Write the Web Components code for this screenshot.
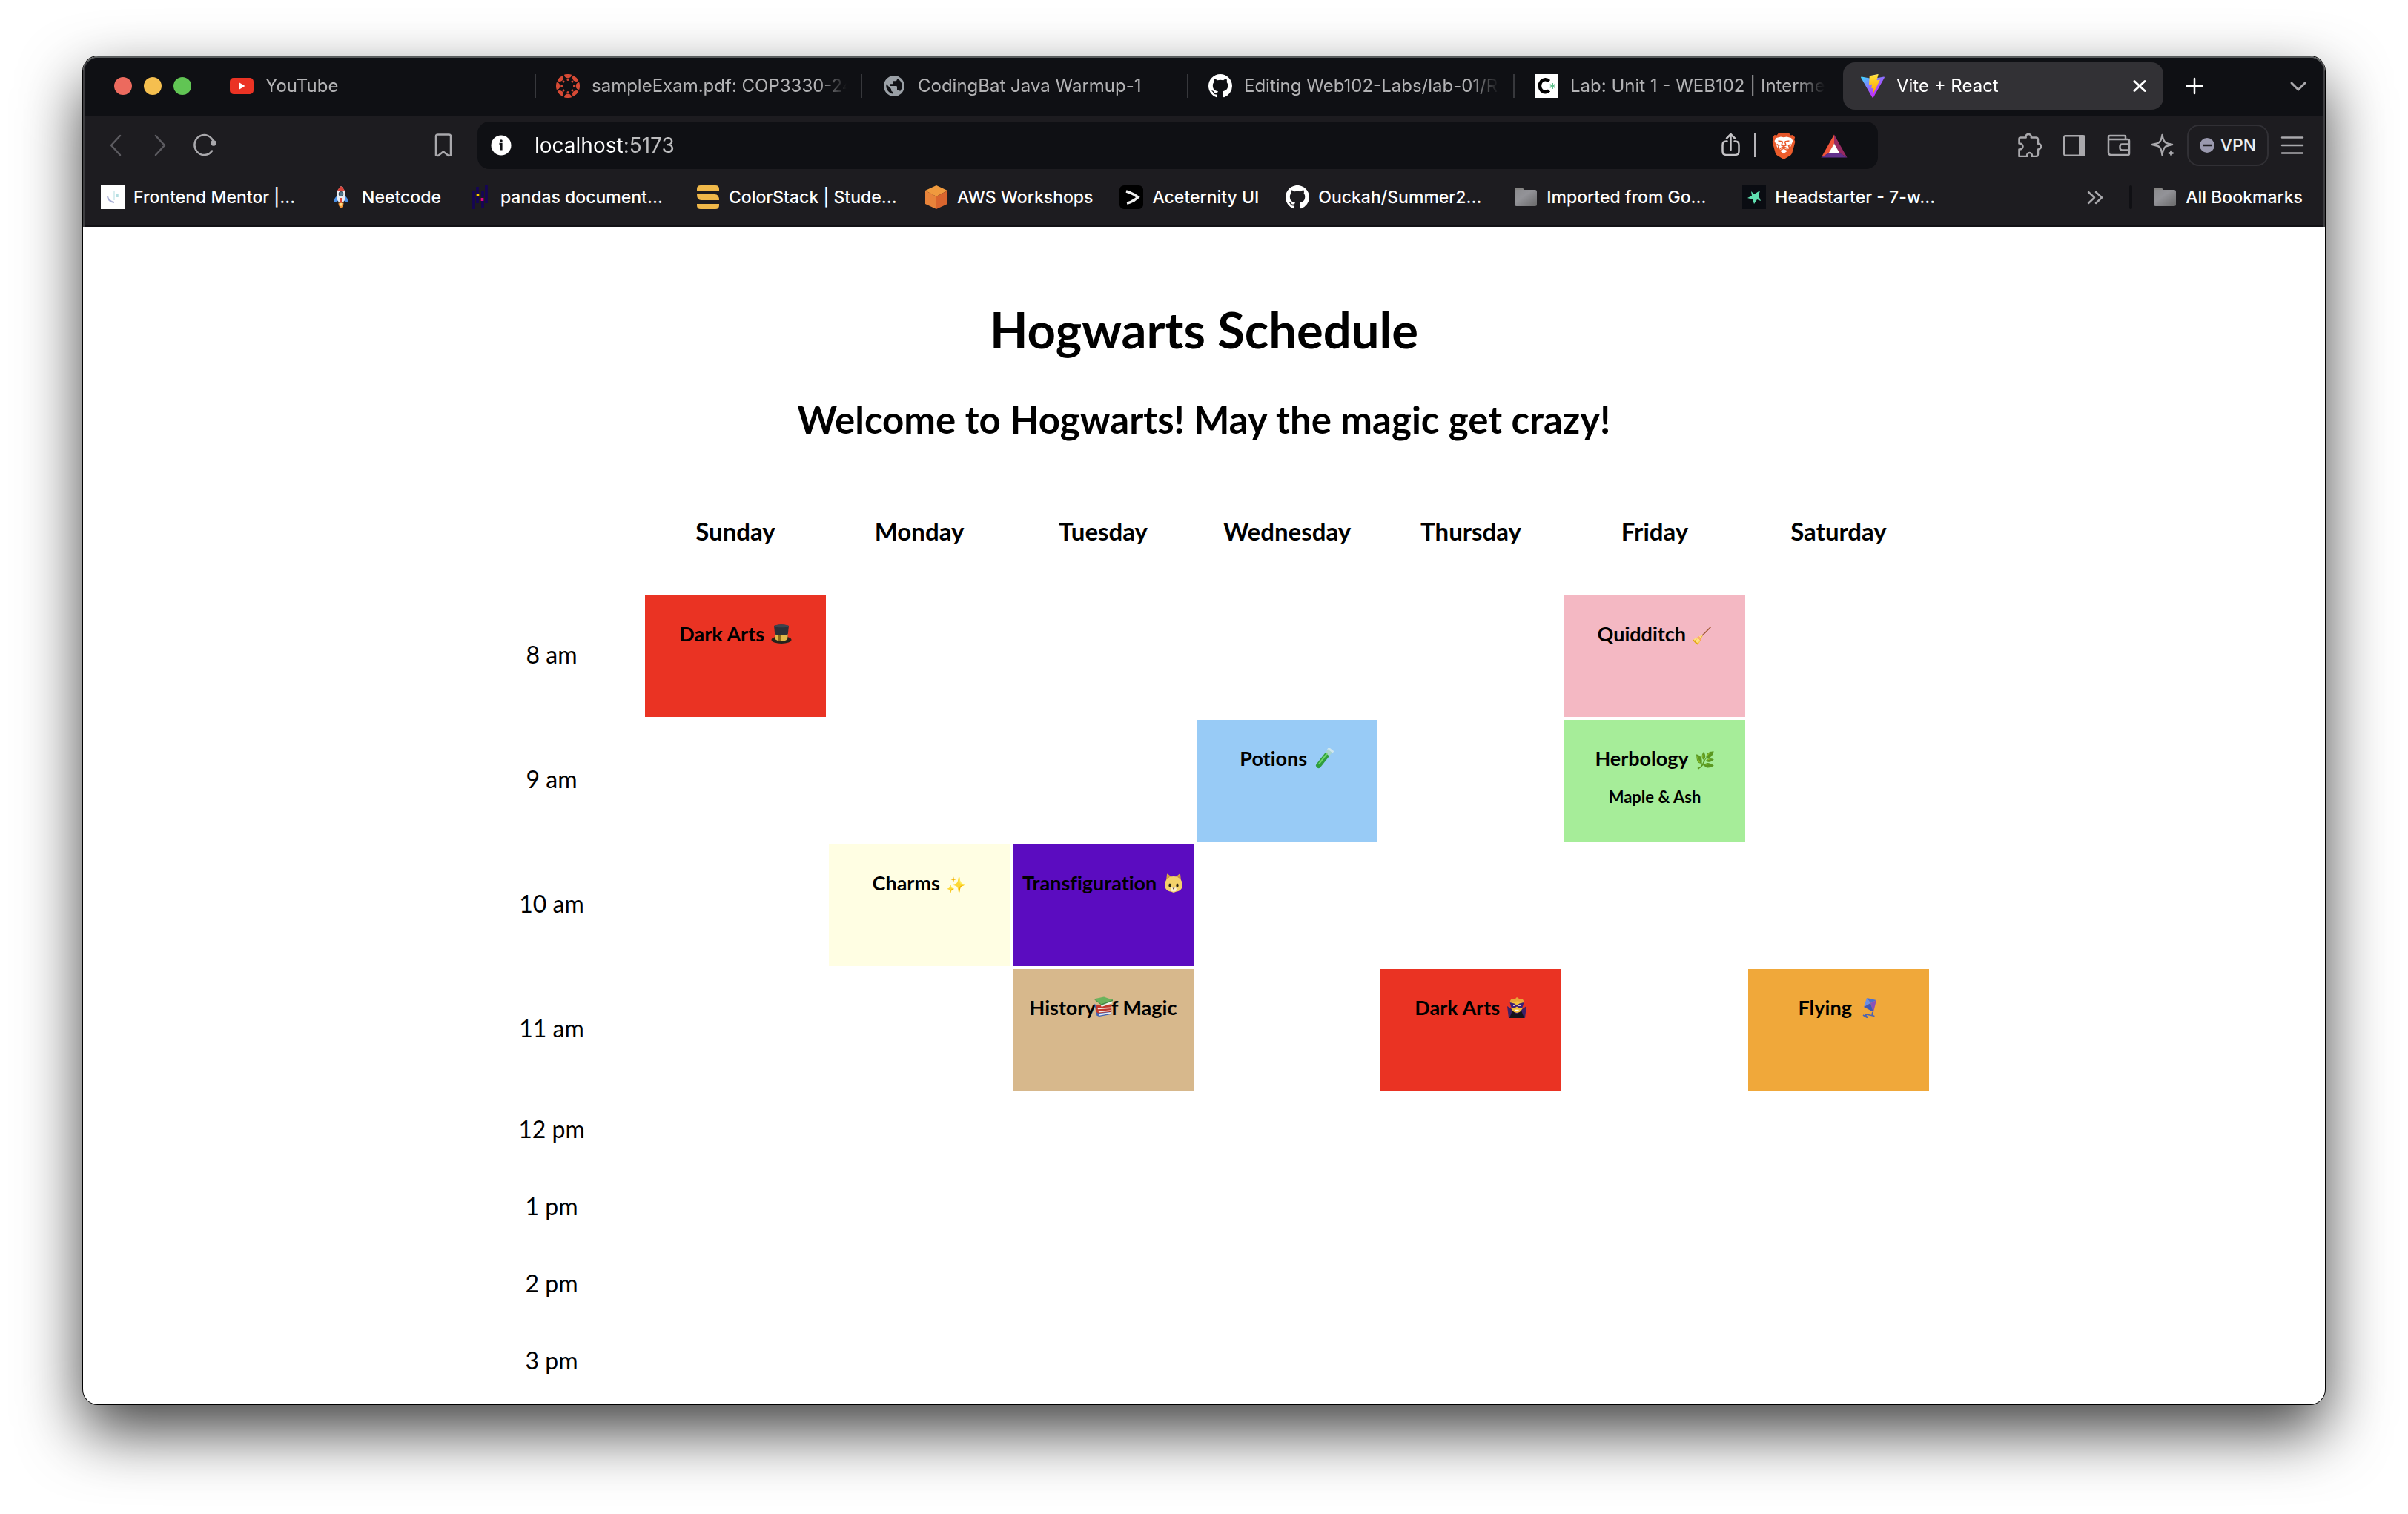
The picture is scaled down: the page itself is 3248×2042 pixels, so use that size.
<!DOCTYPE html>
<html lang="en">
<head>
<meta charset="utf-8">
<meta name="viewport" content="width=device-width, initial-scale=1">
<title>Vite + React</title>
<style>
  html { background: #fff; }
  body { margin: 0; font-family: Lato, "Open Sans", sans-serif; color: #000; }
</style>
</head>
<body>
<browser-window>
  <browser-chrome slot="chrome"></browser-chrome>
  <schedule-page></schedule-page>
</browser-window>

<script>
const GITHUB = '<path fill="#fff" d="M8 0C3.58 0 0 3.58 0 8c0 3.54 2.29 6.53 5.47 7.59.4.07.55-.17.55-.38 0-.19-.01-.82-.01-1.49-2.01.37-2.53-.49-2.69-.94-.09-.23-.48-.94-.82-1.13-.28-.15-.68-.52-.01-.53.63-.01 1.08.58 1.23.82.72 1.21 1.87.87 2.33.66.07-.52.28-.87.51-1.07-1.78-.2-3.64-.89-3.64-3.95 0-.87.31-1.59.82-2.15-.08-.2-.36-1.02.08-2.12 0 0 .67-.21 2.2.82.64-.18 1.32-.27 2-.27s1.36.09 2 .27c1.53-1.04 2.2-.82 2.2-.82.44 1.1.16 1.92.08 2.12.51.56.82 1.27.82 2.15 0 3.07-1.87 3.75-3.65 3.95.29.25.54.73.54 1.48 0 1.07-.01 1.93-.01 2.2 0 .21.15.46.55.38A8.01 8.01 0 0 0 16 8c0-4.42-3.58-8-8-8z"/>';
const line = (d, w = 2.5, c = '#a9a8ac') => `<path d="${d}" fill="none" stroke="${c}" stroke-width="${w}" stroke-linecap="round" stroke-linejoin="round"/>`;
const canvasRing = Array.from({ length: 8 }, (_, i) =>
  `<g transform="rotate(${i * 45} 16 16)"><path d="M11 .8a15.8 15.8 0 0 1 10 0a5 4.6 0 0 1-10 0z"/><circle cx="16" cy="7.6" r="1.5"/></g>`).join('');

/* name: [viewBox, markup] — 32-unit boxes unless the logo has its own grid */
const ICONS = {
  youtube: ['0 0 32 32', '<rect y="5" width="32" height="22" rx="5" fill="#eb3324"/><path d="M13 11.5v9l7.5-4.5z" fill="#fff"/>'],
  canvas: ['0 0 32 32', `<g fill="#d64a35">${canvasRing}</g>`],
  globe: ['0 0 24 24', '<path fill="#9aa0a6" d="M12 1.5C6.2 1.5 1.5 6.2 1.5 12S6.2 22.5 12 22.5 22.5 17.8 22.5 12 17.8 1.5 12 1.5zm-1 18.43c-3.95-.49-7-3.85-7-7.93 0-.62.08-1.21.21-1.79L9 15v1c0 1.1.9 2 2 2v1.93zm6.9-2.54c-.26-.81-1-1.39-1.9-1.39h-1v-3c0-.55-.45-1-1-1H8v-2h2c.55 0 1-.45 1-1V7h2c1.1 0 2-.9 2-2v-.41c2.93 1.19 5 4.06 5 7.41 0 2.08-.8 3.97-2.1 5.39z"/>'],
  github: ['0 0 16 16', GITHUB],
  codepath: ['0 0 32 32', '<rect width="32" height="32" fill="#fff"/><path d="M19.5 9.5A7.5 8.5 0 1 0 19.5 22" fill="none" stroke="#000" stroke-width="4.5"/><path d="M24 12v8M20.5 14l7 4M27.5 14l-7 4" stroke="#5fc08c" stroke-width="2"/>'],
  vite: ['0 0 256 257', '<defs><linearGradient id="a" x1="-.8%" x2="57.6%" y1="7.6%" y2="78.4%"><stop stop-color="#41D1FF"/><stop offset="1" stop-color="#BD34FE"/></linearGradient><linearGradient id="b" x1="43.4%" x2="50.3%" y1="2.2%" y2="89%"><stop stop-color="#FFEA83"/><stop offset=".08" stop-color="#FFDD35"/><stop offset="1" stop-color="#FFA800"/></linearGradient></defs><path fill="url(#a)" d="M255.153 37.938L134.897 252.976c-2.483 4.44-8.862 4.466-11.382.048L.875 37.958c-2.746-4.814 1.371-10.646 6.827-9.67l120.385 21.517a6.537 6.537 0 0 0 2.322-.004l117.867-21.483c5.438-.991 9.574 4.796 6.877 9.62Z"/><path fill="url(#b)" d="M185.432.063L96.44 17.501a3.268 3.268 0 0 0-2.634 3.014l-5.474 92.456a3.268 3.268 0 0 0 3.997 3.378l24.777-5.718c2.318-.535 4.413 1.507 3.936 3.838l-7.361 36.047c-.495 2.426 1.782 4.5 4.151 3.78l15.304-4.649c2.372-.72 4.652 1.36 4.15 3.788l-11.698 56.621c-.732 3.542 3.979 5.473 5.943 2.437l1.313-2.028l72.516-144.72c1.215-2.423-.88-5.186-3.54-4.672l-25.505 4.922c-2.396.462-4.435-1.77-3.759-4.114l16.646-57.705c.677-2.35-1.37-4.583-3.769-4.113Z"/>'],
  close: ['0 0 32 32', line('M9 9.5l14 13M23 9.5l-14 13', 3, '#fff')],
  plus: ['0 0 32 32', line('M16 6v20M6 16h20', 2.5, '#fff')],
  down: ['0 0 32 32', line('M7 12l9 9 9-9', 3)],
  back: ['0 0 32 32', line('M22 3L10 16l12 13', 2.5, '#5c5b60')],
  forward: ['0 0 32 32', line('M10 3l12 13-12 13', 2.5, '#5c5b60')],
  reload: ['0 0 32 32', line('M26 23.5A13 13.5 0 1 1 28 12') + '<circle cx="28" cy="13" r="3.8" fill="#a9a8ac"/>'],
  bookmark: ['0 0 32 32', line('M6 4q0-2.5 2.5-2.5h15Q26 1.5 26 4v25.5l-3 .5-7-5.500-7 5.500-3-.5z')],
  info: ['0 0 28 28', '<circle cx="14" cy="14" r="13.5" fill="#fff"/><circle cx="14" cy="8" r="1.8" fill="#0f1014"/><path d="M11.5 12h2.8v8.500" fill="none" stroke="#0f1014" stroke-width="2.6"/>'],
  share: ['0 0 36 36', line('M13.5 12.5h-1q-5 0-5 5v8.5q0 5 5 5h12q5 0 5-5v-8.5q0-5-5-5h-1M18.5 24V3.5M13 8.5l5.500-5.500 5.500 5.500', 2.5, '#c4c3c6')],
  brave: ['0 0 32 38', '<defs><linearGradient id="a" x2="0" y2="1"><stop stop-color="#e4552a"/><stop offset="1" stop-color="#ef5f2c"/></linearGradient></defs><path fill="url(#a)" d="M9.5 2h13l3 3.400 2.800-.4 2.900 3.300-1 2.700 1.200 3.300-4 14.700c-.5 1.500-1.300 2.700-2.700 3.700L16 38l-8.700-5.300c-1.400-1-2.200-2.200-2.700-3.700L.6 14.300 1.800 11l-1-2.700L3.700 5l2.800.4z"/><path fill="#fff" d="M6 9l6-1.500 4 .8 4-.8L26 9l2.500 4-2.500 5.500-1.200 3.500-4.200 2.800L16 22.500l-4.600 2.300L7.200 22 6 18.500 3.500 13z"/><path d="M8.500 13l5 .8c1 .2.700 1.200.5 2l-1 3 3 1.500 3-1.500-1-3c-.2-.8-.5-1.800.5-2l5-.8M16 20v3M6.500 17.500l3 2-1.500 3.500M25.500 17.500l-3 2 1.500 3.500M10.500 23.500L16 21l5.500 2.500" fill="none" stroke="#e8572a" stroke-width="1.6"/><path fill="#fff" d="M16 24l5 2.500-5 3.800-5-3.800z"/>'],
  bat: ['0 0 36 36', '<path fill="#f0553a" d="M18 3.500v12L11.500 28 .5 34.500z"/><path fill="#982a63" d="M18 3.500v12L24.500 28l11 6.500z"/><path fill="#62308c" d="M11 28h14l10.500 6.500H.5z"/><path fill="#fff" d="M18 15.500L25 28H11z"/>'],
  puzzle: ['0 0 32 32', line('M3.500 5.500h7.200c-.7-2.700 1-4.500 3.300-4.500s4.500 1.800 3.800 4.500H24q3 0 3 3v5.200c2.300.2 4 1.600 4 3.800s-1.700 3.700-4 4V28q0 3-3 3h-5.200c.5-3-1-5-3.300-5s-3.800 2-3.300 5H1.500v-9.500c2.800.3 5-1.500 5-4s-2.200-4.300-5-4V7.500q0-2 2-2z')],
  sidebar: ['0 0 32 32', '<rect x="2.25" y="3.25" width="27.5" height="26.5" rx="2" fill="none" stroke="#a9a8ac" stroke-width="2.5"/><path fill="#a9a8ac" d="M22 3h6q2 0 2 2v23q0 2-2 2h-6z"/>'],
  wallet: ['0 0 32 32', line('M2 8v17.500q0 3.500 3.500 3.500H28q2 0 2-2V10q0-2-2-2H2zV5q0-2 2-2h19.500q1.500 0 1.500 1.500V8M30 14.500H20.500q-3 0-3 3v2q0 3 3 3H30')],
  leo: ['0 0 32 32', line('M14.500 2c1 7 3.500 9.500 4.500 10.200s4.500 1.800 9 2.800c-4.500 1-8 2-9 2.800S15.500 21 14.500 29c-1-8-3.500-10.500-4.500-11.200S5.500 16 1 15c4.500-1 8-2.100 9-2.800S13.500 9 14.500 2z', 2.4) + '<path fill="#a9a8ac" d="M26.500 21l1.600 4 4 1.500-4 1.500-1.600 4-1.600-4-4-1.500 4-1.500z"/>'],
  minus: ['0 0 20 20', '<circle cx="10" cy="10" r="10" fill="#9a99ae"/><path d="M4 10h12" stroke="#1d1c20" stroke-width="2.6"/>'],
  menu: ['0 0 32 32', line('M2 5.500h28M2 16h28M2 26.500h28')],
  more: ['0 0 32 32', line('M7 9l8 7.500L7 24M17 9l8 7.500L17 24')],
  folder: ['0 0 32 32', '<defs><linearGradient id="a" x2="1" y2="1"><stop stop-color="#8b8b8e"/><stop offset=".4" stop-color="#939398"/><stop offset="1" stop-color="#6a6a6b"/></linearGradient></defs><path fill="#858483" d="M1 5q0-2 2-2h8q1.500 0 2 2l1 3H1z"/><rect x="1" y="6" width="30" height="22" rx="2.5" fill="url(#a)"/>'],
  frontend: ['0 0 32 32', '<rect width="32" height="32" fill="#fff"/><path d="M17.500 8v12" stroke="#d9eef0" stroke-width="3"/><path d="M22 11v5" stroke="#b5dfe2" stroke-width="3.5"/><path d="M9 15q1 6.500 9 8" fill="none" stroke="#aab0d6" stroke-width="2"/>'],
  rocket: ['0 0 32 32', '<path fill="#4a90e8" d="M11 14q-5 3-4 9l5-2zM21 14q5 3 4 9l-5-2z"/><path fill="#e9edf2" d="M16 1q6 5 6 13 0 5-2.500 8h-7Q10 19 10 14 10 6 16 1z"/><path fill="#d9433a" d="M16 1q3.500 2.800 5 6.500H11Q12.500 3.800 16 1z"/><circle cx="16" cy="11.5" r="3" fill="#567a90" stroke="#2d3f4c"/><path fill="#d9433a" d="M15 17h2v7h-2z"/><path fill="#f39436" d="M12.500 23.500h7Q19.500 28 16 31q-3.500-3-3.500-7.500z"/><path fill="#fde08a" d="M14.500 24h3q0 3-1.500 4.500-1.500-1.500-1.500-4.500z"/>'],
  pandas: ['0 0 32 32', '<path stroke="#150458" stroke-width="3.6" d="M8 8v24M13 2v9M13 15v9M20 8v8M20 20v10M25 0v24"/><path stroke="#ffca00" stroke-width="3.6" d="M13.500 11v4"/><path stroke="#e70488" stroke-width="3.6" d="M19.500 17v4"/>'],
  colorstack: ['0 0 32 32', '<path fill="#f0b849" d="M6 0h20q5 0 5 5v2.500H1V5q0-5 5-5zM1 12h24q6 0 6 8H7q-6 0-6-8zM1 25h30v2q0 5-5 5H6q-5 0-5-5z"/>'],
  aws: ['0 0 32 32', '<path fill="#f09a3e" d="M16 0l15 7-15 8L1 7z"/><path fill="#e8833a" d="M1 7l15 8v17L1 25z"/><path fill="#d9652e" d="M31 7l-15 8v17l15-7z"/>'],
  aceternity: ['0 0 32 32', '<rect width="32" height="32" rx="6" fill="#000"/><path d="M9 8q8 2 16 8-6 6-15 8" fill="none" stroke="#eee" stroke-width="3.5"/>'],
  headstarter: ['0 0 32 32', '<rect width="32" height="32" fill="#0a0c12"/><path fill="#5fe0b0" d="M12 8l4 4 8-5-2 7 3 7-5-2-4 6-2-6-7-2 6-3z"/>'],
  hat: ['0 0 28 28', '<ellipse cx="14" cy="22" rx="13.5" ry="5" fill="#25221c"/><path fill="#2b3038" d="M4 3q10-3.500 20 0l-2 18q-8 5-16 0z"/><path fill="#e0b84a" d="M5.200 14.500q8.800 3 17.600 0l-.8 7q-8 5-16 0z"/><path fill="#8a6818" d="M10 15.600q2 .3 4 .3v8q-2 0-4-.5z"/><ellipse cx="14" cy="3.300" rx="10" ry="2" fill="#3d444e"/>'],
  tube: ['0 0 28 28', '<g transform="rotate(38 14 14)"><path fill="#cfe6ee" d="M9.500-2h9v3.500h-9z"/><path fill="#a9d4cf" d="M10.500 1h7v9h-7z"/><path fill="#2f9e3d" d="M10.500 7h7v19q0 3.500-3.500 3.500t-3.500-3.500z"/><path fill="#6fd868" d="M12 6h2v18h-2z"/></g>'],
  books: ['0 0 24 26', '<path fill="#3f63b4" d="M1 9l4 3-1 4 18 4 1 2-16 3-3-1z"/><path fill="#eceff4" d="M6 21.500l16-2 .5 1.500L7 24z"/><path fill="#c13a2e" d="M3 11l19-1 .5 9-17 2q-3-2-2.500-5z"/><path fill="#f0ece6" d="M5 14.500l17-1v1.300L5.500 16zM6 18.500l16-1.500v1.300L7 20z"/><path fill="#eef3ea" d="M9 11l14-5v2.500l-13 4.500z"/><path fill="#3f8a45" d="M1 4l9 7 14-5.500V4z"/><path fill="#6bb35c" d="M1 3l12-2.500 11 4L9.500 9.500z"/>'],
  cat: ['0 0 28 28', '<path fill="#d9a93c" d="M4 11L5 2q.5-1 1.500 0l5 4h5l5-4q1-1 1.500 0l1 9z"/><path fill="#b97f52" d="M6.500 4.500l3 3-3 2.500zM21.500 4.500l-3 3 3 2.500z"/><path fill="#f3d26a" d="M14 5c8 0 12 6 12 12 0 5-4 8-8 8.500L14 27l-4-1.500C6 25 2 22 2 17 2 11 6 5 14 5z"/><ellipse cx="9" cy="17" rx="1.7" ry="2.6" fill="#2b2415"/><ellipse cx="19" cy="17" rx="1.7" ry="2.6" fill="#2b2415"/><ellipse cx="14" cy="22.5" rx="4" ry="3" fill="#fbf0cf"/><path fill="#5c3b2c" d="M12.500 20.500h3L14 23z"/>'],
  villain: ['0 0 28 28', '<path fill="#3c2067" d="M1 12l6 4 7 3 7-3 6-4-2 16H3z"/><path fill="#15131b" d="M8 18l6 5 6-5 4 10H4z"/><ellipse cx="14" cy="11.5" rx="8" ry="9.5" fill="#f3c13d"/><path fill="#e8a63a" d="M5 9Q4 3 8 2l3 1 3-3 3 2 4 0q3 2 2 7-4-4-9-3.500T5 9z"/><path fill="#3c1f74" d="M4.500 7l6 1.500L14 11l3.500-2.500 6-1.500-2 7-4.500.5-3-2-3 2-4.500-.5z"/><path d="M9 11h3M16 11h3M11.500 17.500h5" stroke="#fff" stroke-width="1.4"/>'],
  kite: ['0 0 28 28', '<path fill="#4a6fd0" d="M12 1l13 3-8 4z"/><path fill="#6a8fe6" d="M12 1l5 7-9 5z"/><path fill="#8b52b8" d="M25 4l-8 4 4 12z"/><path fill="#3f58b6" d="M8 13l9-5 4 12z"/><path d="M20 20q-2 4 1 5t-5-1-4 2-5-2" fill="none" stroke="#4d63b0" stroke-width="1.6"/>']
};

/* html is either fixed markup or a function of the element, run once it is connected */
const register = (name, css, html) => customElements.define(name, class extends HTMLElement {
  constructor() {
    super();
    this.attachShadow({ mode: 'open' });
  }
  connectedCallback() {
    if (this.shadowRoot.childNodes.length) return;
    const tpl = document.createElement('template');
    tpl.innerHTML = `<style>${css}</style>${typeof html === 'function' ? html(this) : html}`;
    this.shadowRoot.append(tpl.content.cloneNode(true));
  }
});

register('ui-icon', `
  :host { display: inline-block; flex: none; width: 32px; height: 32px; }
  svg { display: block; width: 100%; height: 100%; }
`, el => {
  const [box, body] = ICONS[el.getAttribute('name')];
  return `<svg viewBox="${box}" aria-hidden="true">${body}</svg>`;
});

register('icon-button', `
  :host { display: block; flex: none; width: 60px; height: 56px; }
  button { display: flex; align-items: center; justify-content: center; width: 100%; height: 100%; margin: 0; padding: 0; border: 0; background: none; }
`, el => `<button type="button" aria-label="${el.getAttribute('label')}"><ui-icon name="${el.getAttribute('icon')}"></ui-icon></button>`);

register('browser-tab', `
  :host { display: flex; align-items: center; flex: 0 1 440px; min-width: 0; color: #b3b3b5; }
  .tab { display: flex; align-items: center; gap: 16px; flex: 1; min-width: 0; height: 64px; padding: 0 16px 0 24px; border-radius: 16px; box-sizing: border-box; }
  button { flex: 1; min-width: 0; margin: 0; padding: 0; border: 0; background: none; font: inherit; line-height: 32px; color: inherit; text-align: left; white-space: nowrap; overflow: hidden; mask-image: linear-gradient(to left, transparent, #000 40px); }
  .close { flex: none; width: 32px; height: 32px; mask-image: none; }
  i { flex: none; width: 2px; height: 32px; margin: 0 3px; background: #37383c; }
  :host([last]) i, :host([active]) i { background: none; }
  :host([active]) { color: #fff; }
  :host([active]) .tab { background: #323135; }
`, el => `<div class="tab"><ui-icon name="${el.getAttribute('icon')}"></ui-icon><button type="button" role="tab" aria-selected="${el.hasAttribute('active')}"><slot></slot></button>${
  el.hasAttribute('active') ? '<button class="close" type="button" aria-label="Close tab"><ui-icon name="close"></ui-icon></button>' : ''}</div><i></i>`);

register('tab-strip', `
  :host { display: flex; align-items: center; padding: 6px 8px 8px 40px; background: #0f1014; font-size: 24px; }
  .lights { display: flex; flex: none; gap: 16px; margin-right: 28px; }
  .lights button { width: 24px; height: 24px; margin: 0; padding: 0; border: 0; border-radius: 50%; }
  .r { background: #ec6a5e; } .y { background: #f5bf4f; } .g { background: #61c554; }
  .tabs { display: flex; flex: 0 1 2640px; min-width: 0; }
  .plus { margin-left: 4px; } .down { margin-left: auto; width: 52px; }
`, `<div class="lights"><button class="r" aria-label="Close window"></button><button class="y" aria-label="Minimise"></button><button class="g" aria-label="Full screen"></button></div>
  <div class="tabs" role="tablist">
    <browser-tab icon="youtube">YouTube</browser-tab>
    <browser-tab icon="canvas">sampleExam.pdf: COP3330-24Summer</browser-tab>
    <browser-tab icon="globe">CodingBat Java Warmup-1</browser-tab>
    <browser-tab icon="github">Editing Web102-Labs/lab-01/README.md</browser-tab>
    <browser-tab icon="codepath" last>Lab: Unit 1 - WEB102 | Intermediate</browser-tab>
    <browser-tab icon="vite" active>Vite + React</browser-tab>
  </div>
  <icon-button class="plus" icon="plus" label="New tab"></icon-button>
  <icon-button class="down" icon="down" label="Search tabs"></icon-button>`);

register('address-bar', `
  :host { display: flex; align-items: center; height: 64px; padding: 0 41px 0 18px; border-radius: 16px; background: #0f1014; box-sizing: border-box; }
  .info { width: 28px; height: 28px; margin-right: 31px; }
  input { flex: 1; min-width: 0; margin: 0; padding: 0; border: 0; outline: 0; height: 40px; font: inherit; font-size: 28px; color: #fff;
    background: linear-gradient(to right, #fff 119px, #bdbdbf 119px); -webkit-background-clip: text; background-clip: text; -webkit-text-fill-color: transparent; }
  .share, .bat { width: 36px; height: 36px; }
  i { width: 2px; height: 32px; margin: 0 22px 0 14px; background: #b5b4b8; }
  .brave { height: 38px; margin-right: 34px; }
`, `<ui-icon class="info" name="info"></ui-icon><input type="text" aria-label="Address" value="localhost:5173">
  <ui-icon class="share" name="share"></ui-icon><i></i><ui-icon class="brave" name="brave"></ui-icon><ui-icon class="bat" name="bat"></ui-icon>`);

register('tool-bar', `
  :host { display: flex; align-items: center; padding: 8px 12px; }
  .left, .right { display: flex; align-items: center; flex: none; box-sizing: border-box; }
  .left { width: 518px; padding-right: 16px; }
  .left icon-button:last-child { margin-left: auto; }
  address-bar { flex: 1; min-width: 0; }
  .right { width: 589px; justify-content: flex-end; }
  .vpn { display: flex; align-items: center; justify-content: center; gap: 8px; width: 110px; height: 56px; margin: 0 2px; padding: 0; border: 2px solid #313035; border-radius: 16px; background: none; font: inherit; font-size: 23px; font-weight: 500; color: #eee; }
  .vpn ui-icon { width: 20px; height: 20px; }
`, `<div class="left"><icon-button icon="back" label="Back"></icon-button><icon-button icon="forward" label="Forward"></icon-button><icon-button icon="reload" label="Reload"></icon-button><icon-button icon="bookmark" label="Bookmark this page"></icon-button></div>
  <address-bar></address-bar>
  <div class="right"><icon-button icon="puzzle" label="Extensions"></icon-button><icon-button icon="sidebar" label="Sidebar"></icon-button><icon-button icon="wallet" label="Wallet"></icon-button><icon-button icon="leo" label="Assistant"></icon-button>
  <button class="vpn" type="button"><ui-icon name="minus"></ui-icon>VPN</button><icon-button icon="menu" label="Menu"></icon-button></div>`);

register('book-mark', `
  :host { display: block; flex: none; }
  a { display: flex; align-items: center; gap: 12px; color: #fff; text-decoration: none; white-space: nowrap; line-height: 32px; }
  :host([wide]) span { width: 228px; }
`, el => `<a href="#"><ui-icon name="${el.getAttribute('icon')}"></ui-icon><span><slot></slot></span></a>`);

register('bookmarks-bar', `
  :host { display: flex; align-items: center; gap: 36px; height: 60px; padding: 0 28px 8px 22px; border-bottom: 2px solid #121115; font-size: 23px; font-weight: 500; overflow: hidden; }
  .end { display: flex; align-items: center; gap: 28px; margin-left: auto; }
  icon-button { width: 36px; }
  i { width: 4px; height: 32px; background: #101014; border-radius: 2px; }
`, `<book-mark icon="frontend" wide>Frontend Mentor |…</book-mark><book-mark icon="rocket">Neetcode</book-mark><book-mark icon="pandas" wide>pandas document…</book-mark>
  <book-mark icon="colorstack" wide>ColorStack | Stude…</book-mark><book-mark icon="aws">AWS Workshops</book-mark><book-mark icon="aceternity">Aceternity UI</book-mark>
  <book-mark icon="github" wide>Ouckah/Summer2…</book-mark><book-mark icon="folder" wide>Imported from Go…</book-mark><book-mark icon="headstarter" wide>Headstarter - 7-w…</book-mark>
  <div class="end"><icon-button icon="more" label="More bookmarks"></icon-button><i></i><book-mark icon="folder">All Bookmarks</book-mark></div>`);

register('browser-chrome', `
  :host { display: block; border: 2px solid #3e3e41; border-top-color: #585b5c; border-bottom: 0; border-radius: 20px 20px 0 0; background: #1d1c20; font-family: Inter, Roboto, sans-serif; color: #fff; overflow: hidden; }
`, '<tab-strip></tab-strip><tool-bar></tool-bar><bookmarks-bar></bookmarks-bar>');

register('browser-window', `
  :host { display: flex; flex-direction: column; min-height: 100vh; padding: 76px 112px 148px; box-sizing: border-box; overflow: hidden; }
  .frame { flex: 1; border-radius: 20px; background: #fff; box-shadow: 0 0 0 1px #000, 0 36px 84px rgba(0, 0, 0, .75); }
`, '<div class="frame"><slot name="chrome"></slot><slot></slot></div>');

register('class-event', `
  :host { display: block; height: 164px; padding-top: 34px; box-sizing: border-box; background: var(--tone); font-weight: 700; font-variant-ligatures: none; }
  h3 { position: relative; margin: 0; font-size: 27px; line-height: 36px; white-space: nowrap; }
  p { margin: 14px 0 0; font-size: 22px; line-height: 36px; }
  ui-icon { width: 28px; height: 28px; margin-left: 2px; vertical-align: -4px; }
  .emoji { margin-left: 2px; font-size: 22px; }
  :host([overlay]) ui-icon { position: absolute; left: calc(50% - 14px); top: 3px; margin: 0; }
`, el => {
  const get = n => el.getAttribute(n);
  const mark = get('icon') ? `<ui-icon name="${get('icon')}"></ui-icon>` : `<span class="emoji">${get('emoji')}</span>`;
  return `<h3>${get('label')}${el.hasAttribute('overlay') ? '' : ' '}${mark}</h3>${get('place') ? `<p>${get('place')}</p>` : ''}`;
});

const DAYS = ['Sunday', 'Monday', 'Tuesday', 'Wednesday', 'Thursday', 'Friday', 'Saturday'];
const HOURS = ['8 am', '9 am', '10 am', '11 am', '12 pm', '1 pm', '2 pm', '3 pm'];
const EVENTS = {
  '8 am': { Sunday: ['#ea3323', 'Dark Arts', 'icon="hat"'], Friday: ['#f4b8c3', 'Quidditch', 'emoji="🧹"'] },
  '9 am': { Wednesday: ['#98cbf6', 'Potions', 'icon="tube"'], Friday: ['#a6ed99', 'Herbology', 'emoji="🌿" place="Maple &amp; Ash"'] },
  '10 am': { Monday: ['#fffee3', 'Charms', 'emoji="✨"'], Tuesday: ['#5b0cc0', 'Transfiguration', 'icon="cat"'] },
  '11 am': { Tuesday: ['#d7b88c', 'History of Magic', 'icon="books" overlay'], Thursday: ['#ea3323', 'Dark Arts', 'icon="villain"'], Saturday: ['#f0a83a', 'Flying', 'icon="kite"'] }
};

register('schedule-table', `
  :host { display: block; max-width: 1988px; margin: 0 auto; padding-right: 24px; }
  table { width: 100%; table-layout: fixed; border-spacing: 4px; text-align: center; }
  th, td { padding: 0; font-size: 32px; line-height: 40px; box-sizing: border-box; }
  thead th { height: 167px; font-size: 33px; }
  tbody th { height: 100px; padding-bottom: 4px; font-weight: 400; }
  td { vertical-align: top; }
`, () => `<table><thead><tr><td></td>${DAYS.map(d => `<th scope="col">${d}</th>`).join('')}</tr></thead><tbody>${
  HOURS.map(h => `<tr><th scope="row">${h}</th>${DAYS.map(d => {
    const e = EVENTS[h] && EVENTS[h][d];
    return `<td>${e ? `<class-event style="--tone: ${e[0]}" label="${e[1]}" ${e[2]}></class-event>` : ''}</td>`;
  }).join('')}</tr>`).join('')}</tbody></table>`);

register('schedule-page', `
  :host { display: block; padding: 102px 64px 0; text-align: center; }
  h1 { margin: 0; font-size: 67px; line-height: 72px; }
  h2 { margin: 56px 0 32px; font-size: 51px; line-height: 60px; }
`, '<h1>Hogwarts Schedule</h1><h2>Welcome to Hogwarts! May the magic get crazy!</h2><schedule-table></schedule-table>');
</script>
</body>
</html>
